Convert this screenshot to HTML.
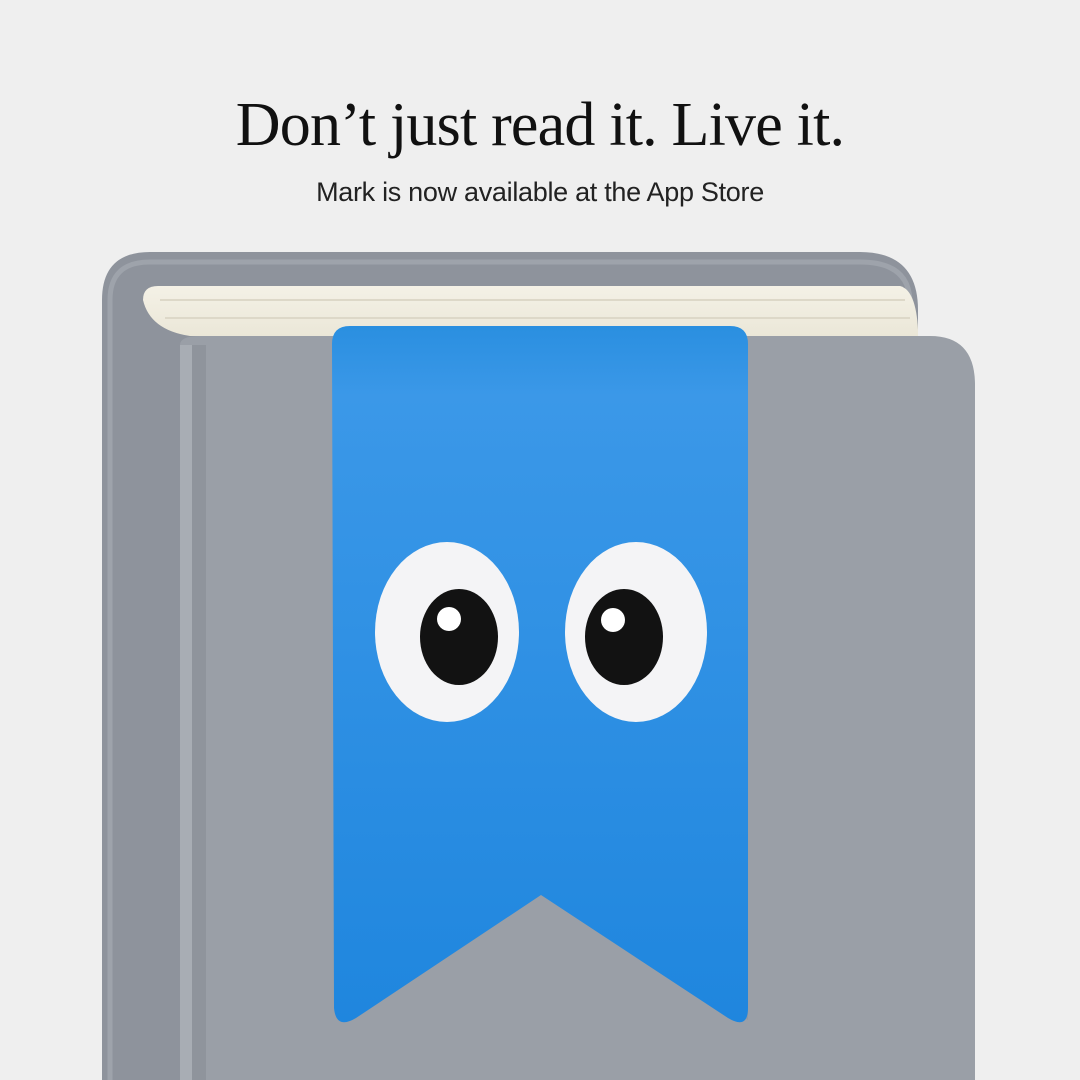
<!DOCTYPE html>
<html><head><meta charset="utf-8"><style>
html,body{margin:0;padding:0;background:#efefef;width:1080px;height:1080px;overflow:hidden;position:relative}
h1{position:absolute;top:90px;left:0;width:1080px;text-align:center;margin:0;font-family:"Liberation Serif",serif;font-weight:normal;font-size:62px;color:#111;letter-spacing:-0.8px}
p{position:absolute;top:177px;left:0;width:1080px;text-align:center;margin:0;font-family:"Liberation Sans",sans-serif;font-size:27px;color:#222;letter-spacing:-0.3px}
svg{position:absolute;left:0;top:0}
</style></head><body>
<h1>Don’t just read it. Live it.</h1>
<p>Mark is now available at the App Store</p>
<svg width="1080" height="1080" viewBox="0 0 1080 1080">
<defs>
<linearGradient id="pg" x1="0" y1="0" x2="0" y2="1"><stop offset="0" stop-color="#f4f1e6"/><stop offset="1" stop-color="#ebe7d8"/></linearGradient>
<linearGradient id="bl" x1="0" y1="0" x2="0" y2="1"><stop offset="0" stop-color="#2a8fe0"/><stop offset="0.1" stop-color="#3b98e8"/><stop offset="1" stop-color="#1f86de"/></linearGradient>
</defs>
<path d="M102 1080 V300 Q102 252 150 252 H860 Q918 252 918 310 V340 H190 V1080 Z" fill="#8e939c"/>
<path d="M110 1080 V300 Q110 262 150 262 H860 Q908 262 910 300" stroke="#9ea3ab" stroke-width="5" fill="none"/>
<path d="M143 300 Q143 286 158 286 H900 Q916 290 918 330 V336 H190 Q150 330 143 300 Z" fill="url(#pg)"/>
<line x1="160" y1="300" x2="905" y2="300" stroke="#ddd8c8" stroke-width="2"/>
<line x1="165" y1="318" x2="910" y2="318" stroke="#ddd8c8" stroke-width="2"/>
<path d="M180 1080 V345 Q180 336 200 336 H930 Q975 336 975 385 V1080 Z" fill="#9a9fa7"/>
<rect x="180" y="345" width="12" height="735" fill="#a8adb4"/>
<rect x="192" y="345" width="14" height="735" fill="#8f949c"/>
<path d="M748 340 V1020 L541 895 V880 Z" fill="#8a8f97" opacity="0.4"/>
<path d="M332 344 Q332 326 350 326 H730 Q748 326 748 344 V1008 Q748 1030 728 1018 L541 895 L356 1018 Q336 1030 334 1008 Z" fill="url(#bl)"/>
<ellipse cx="447" cy="632" rx="72" ry="90" fill="#f4f4f6"/>
<ellipse cx="459" cy="637" rx="39" ry="48" fill="#121212"/>
<circle cx="449" cy="619" r="12" fill="#fff"/>
<ellipse cx="636" cy="632" rx="71" ry="90" fill="#f4f4f6"/>
<ellipse cx="624" cy="637" rx="39" ry="48" fill="#121212"/>
<circle cx="613" cy="620" r="12" fill="#fff"/>
</svg>
</body></html>
